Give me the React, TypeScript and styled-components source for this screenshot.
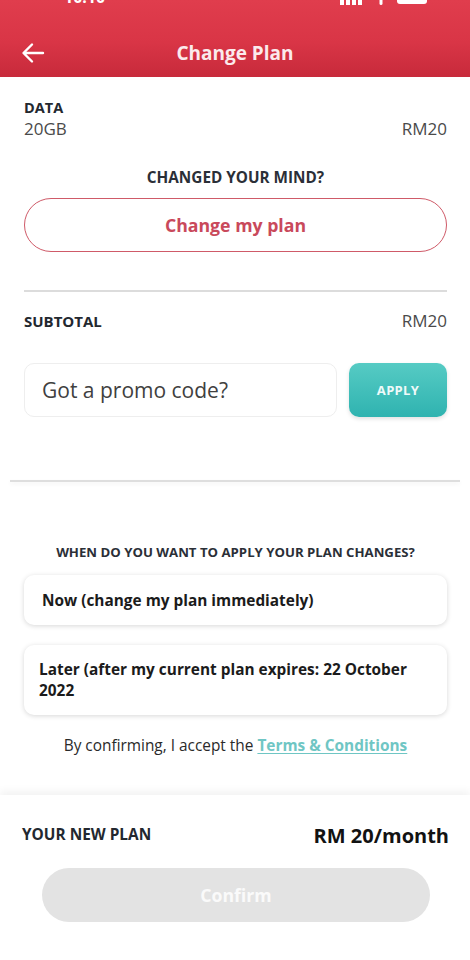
import React from "react";
import styled, { createGlobalStyle } from "styled-components";

const Global = createGlobalStyle`
  html, body { margin: 0; padding: 0; background: #ffffff; }
  body { font-family: "Open Sans", "Noto Sans", sans-serif; -webkit-font-smoothing: antialiased; }
  * { box-sizing: border-box; }
`;

const Page = styled.div`
  width: 470px;
  min-height: 960px;
  display: flex;
  flex-direction: column;
  background: #fff;
  overflow: hidden;
`;

const Header = styled.header`
  height: 77px;
  display: flex;
  flex-direction: column;
  background: linear-gradient(180deg, #e03d4d 0%, #d93546 55%, #c72a3b 100%);
  color: #fff;
`;

const StatusBar = styled.div`
  height: 30px;
  overflow: hidden;
  display: flex;
  justify-content: space-between;
  align-items: flex-start;
  padding: 0 42px 0 64px;
`;

const Clock = styled.span`
  margin-top: -13px;
  font-size: 16px;
  font-weight: 700;
  line-height: 20px;
  color: #fff;
`;

const StatusIcons = styled.div`
  margin-top: -11px;
  display: flex;
  align-items: flex-end;
  gap: 10px;
`;

const TitleBar = styled.div`
  flex: 1;
  display: grid;
  grid-template-columns: 60px 1fr 60px;
  align-items: center;
  padding-bottom: 1px;
`;

const BackButton = styled.div`
  display: flex;
  align-items: center;
  padding-left: 21px;
`;

const Title = styled.h1`
  margin: 0;
  text-align: center;
  font-size: 19px;
  font-weight: 700;
  color: #fbeaec;
`;

const Body = styled.main`
  display: flex;
  flex-direction: column;
  padding: 21px 23px 0 24px;
`;

const Label = styled.div<{ $size?: number }>`
  font-size: ${(p) => p.$size ?? 14.5}px;
  font-weight: 700;
  line-height: 20px;
  color: #23282f;
`;

const Row = styled.div<{ $mt?: number }>`
  display: flex;
  justify-content: space-between;
  align-items: center;
  margin-top: ${(p) => p.$mt ?? 0}px;
`;

const Value = styled.span`
  font-size: 17px;
  line-height: 22px;
  color: #4a4a4a;
`;

const Center = styled.div<{ $mt: number; $size: number; $lh: number }>`
  margin-top: ${(p) => p.$mt}px;
  text-align: center;
  font-size: ${(p) => p.$size}px;
  line-height: ${(p) => p.$lh}px;
  font-weight: 700;
  color: #2b2f37;
`;

const OutlineButton = styled.button`
  margin-top: 11px;
  height: 54px;
  width: 100%;
  border: 1.5px solid #cf5a68;
  border-radius: 27px;
  background: #fff;
  font-family: inherit;
  font-size: 17.7px;
  font-weight: 700;
  color: #c9495b;
`;

const Rule = styled.hr`
  margin: 38px 0 0;
  border: none;
  height: 2px;
  background: #dcdcdc;
`;

const PromoRow = styled.div`
  margin-top: 31px;
  display: grid;
  grid-template-columns: 1fr 98px;
  gap: 12px;
  height: 54px;
`;

const PromoInput = styled.div`
  border: 1px solid #eeeeee;
  border-radius: 10px;
  display: flex;
  align-items: center;
  padding-left: 17px;
  font-size: 21px;
  color: #404040;
`;

const ApplyButton = styled.button`
  border: none;
  border-radius: 10px;
  background: linear-gradient(180deg, #56cbc4 0%, #2fb3b0 100%);
  box-shadow: 0 2px 4px rgba(0, 0, 0, 0.12);
  color: #eefaf9;
  font-family: inherit;
  font-size: 13px;
  font-weight: 700;
  letter-spacing: 0.3px;
`;

const Divider = styled.div`
  margin: 63px -13px 0 -14px;
  height: 2px;
  background: #dedede;
  box-shadow: 0 2px 4px rgba(0, 0, 0, 0.06);
`;

const OptionCard = styled.div<{ $mt: number; $h: number; $pl: number }>`
  margin-top: ${(p) => p.$mt}px;
  min-height: ${(p) => p.$h}px;
  border-radius: 10px;
  background: #fff;
  box-shadow: 0 1px 5px rgba(0, 0, 0, 0.16);
  display: flex;
  align-items: center;
  padding: 4px 30px 4px ${(p) => p.$pl}px;
  font-size: 15.4px;
  font-weight: 700;
  line-height: 21px;
  color: #1b1b1b;
`;

const Terms = styled.p`
  margin: 20px 0 0;
  text-align: center;
  font-size: 15.4px;
  line-height: 22px;
  color: #2a2a2a;
`;

const TermsLink = styled.a`
  color: #6fc6c4;
  font-weight: 700;
  text-decoration: underline;
  text-underline-offset: 2px;
`;

const BottomSheet = styled.footer`
  margin-top: 38px;
  flex: 1;
  display: flex;
  flex-direction: column;
  background: #fff;
  box-shadow: 0 -4px 8px rgba(0, 0, 0, 0.05);
  padding: 27px 21px 38px 22px;
`;

const PlanRow = styled.div`
  display: flex;
  justify-content: space-between;
  align-items: center;
  height: 26px;
`;

const Price = styled.span`
  font-size: 20px;
  font-weight: 700;
  color: #121212;
`;

const ConfirmButton = styled.button`
  margin: 20px 19px 0 20px;
  height: 54px;
  border: none;
  border-radius: 27px;
  background: #e3e3e3;
  color: #fafafa;
  font-family: inherit;
  font-size: 17.7px;
  font-weight: 700;
`;

const BackArrow = () => (
  <svg width="24" height="22" viewBox="0 0 24 22" fill="none">
    <path d="M22 11H3M11 2.5L2.5 11L11 19.5" stroke="#fff" strokeWidth="2.4" strokeLinecap="round" strokeLinejoin="round" />
  </svg>
);

const Signal = () => (
  <svg width="26" height="14" viewBox="0 0 26 14">
    <rect x="0" y="9" width="4" height="5" fill="#fff" />
    <rect x="6" y="6" width="4" height="8" fill="#fff" />
    <rect x="12" y="3" width="4" height="11" fill="#fff" />
    <rect x="18" y="0" width="4" height="14" fill="#fff" />
  </svg>
);

const Wifi = () => (
  <svg width="10" height="14" viewBox="0 0 10 14">
    <rect x="3.5" y="0" width="3" height="14" rx="1.5" fill="#fff" />
  </svg>
);

const Battery = () => (
  <svg width="32" height="16" viewBox="0 0 32 16">
    <rect x="1" y="1" width="30" height="14" rx="3" fill="#fff" />
  </svg>
);

export default function App() {
  return (
    <Page>
      <Global />
      <Header>
        <StatusBar>
          <Clock>10:10</Clock>
          <StatusIcons>
            <Signal />
            <Wifi />
            <Battery />
          </StatusIcons>
        </StatusBar>
        <TitleBar>
          <BackButton>
            <BackArrow />
          </BackButton>
          <Title>Change Plan</Title>
          <span />
        </TitleBar>
      </Header>

      <Body>
        <Label>DATA</Label>
        <Row>
          <Value>20GB</Value>
          <Value>RM20</Value>
        </Row>

        <Center $mt={27} $size={15.3} $lh={20}>CHANGED YOUR MIND?</Center>
        <OutlineButton>Change my plan</OutlineButton>

        <Rule />

        <Row $mt={18}>
          <Label $size={15}>SUBTOTAL</Label>
          <Value>RM20</Value>
        </Row>

        <PromoRow>
          <PromoInput>Got a promo code?</PromoInput>
          <ApplyButton>APPLY</ApplyButton>
        </PromoRow>

        <Divider />

        <Center $mt={61} $size={13.2} $lh={18}>WHEN DO YOU WANT TO APPLY YOUR PLAN CHANGES?</Center>

        <OptionCard $mt={14} $h={50} $pl={18}>Now (change my plan immediately)</OptionCard>
        <OptionCard $mt={20} $h={70} $pl={15}>Later (after my current plan expires: 22 October 2022</OptionCard>

        <Terms>
          By confirming, I accept the <TermsLink>Terms &amp; Conditions</TermsLink>
        </Terms>
      </Body>

      <BottomSheet>
        <PlanRow>
          <Label $size={15.4}>YOUR NEW PLAN</Label>
          <Price>RM 20/month</Price>
        </PlanRow>
        <ConfirmButton>Confirm</ConfirmButton>
      </BottomSheet>
    </Page>
  );
}
